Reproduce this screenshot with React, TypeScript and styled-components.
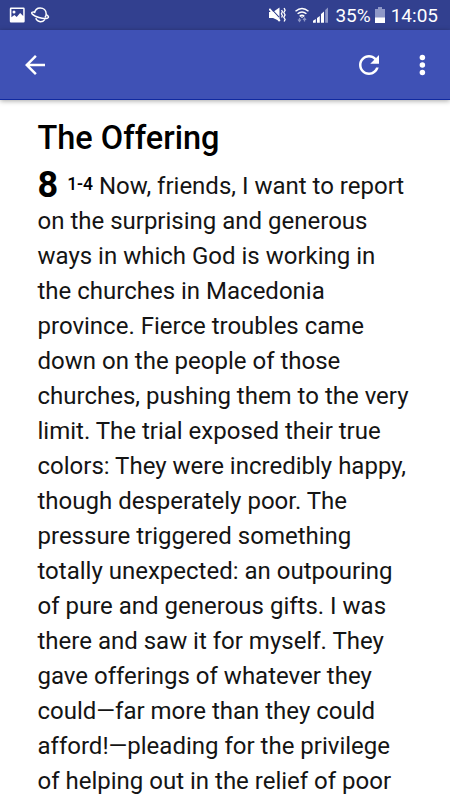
import React from "react";
import styled, { createGlobalStyle } from "styled-components";

const Global = createGlobalStyle`
  * { box-sizing: border-box; }
  body { margin: 0; background: #fff; overflow: hidden; font-family: Roboto, sans-serif; }
`;

const Screen = styled.div`
  width: 450px;
  height: 800px;
  overflow: hidden;
  background: #fff;
  display: flex;
  flex-direction: column;
`;

const StatusBar = styled.header`
  height: 30px;
  flex: none;
  background: #32408f;
  color: #fff;
  display: flex;
  align-items: center;
  justify-content: space-between;
  padding: 0 12px 0 9px;
`;

const Cluster = styled.div`
  display: flex;
  align-items: center;
`;

const StatusText = styled.span`
  font-size: 19px;
  line-height: 30px;
  padding-top: 1px;
  white-space: nowrap;
`;

const Glyph = styled.svg<{ $w: number; $h: number; $gap?: number; $lead?: number }>`
  width: ${p => p.$w}px;
  height: ${p => p.$h}px;
  margin-right: ${p => p.$gap ?? 0}px;
  margin-left: ${p => p.$lead ?? 0}px;
  fill: #fff;
  display: block;
  flex: none;
`;

const AppBar = styled.nav`
  height: 70px;
  flex: none;
  background: #3f51b5;
  border-bottom: 1px solid #1029a0;
  box-shadow: 0 1px 5px rgba(0, 0, 0, 0.35);
  display: flex;
  align-items: center;
  justify-content: space-between;
  padding: 1px 13px 0 20px;
`;

const BarButton = styled.button`
  border: 0;
  padding: 0;
  background: none;
`;

const Actions = styled.div`
  display: flex;
  gap: 23px;
`;

const Article = styled.main`
  padding: 18px 0 0 37.5px;
  color: #000;
  white-space: nowrap;
`;

const Heading = styled.h1`
  margin: 0 0 11px;
  font-size: 32.5px;
  line-height: 40px;
  font-weight: 500;
`;

const Passage = styled.div`
  font-size: 24px;
  line-height: 35px;
`;

const Line = styled.div`
  height: 35px;
  display: flex;
  align-items: baseline;
`;

const Prose = styled.span`
  font-weight: 400;
  color: #141414;
`;

const Chapter = styled.b`
  font-size: 36px;
  line-height: 20px;
  font-weight: 700;
  margin-right: 9px;
  transform: translateY(3px);
`;

const Verse = styled.span`
  font-size: 17.5px;
  font-weight: 500;
  line-height: 20px;
  margin-right: 6px;
  transform: translateY(-4px);
`;

const lines = [
  "on the surprising and generous",
  "ways in which God is working in",
  "the churches in Macedonia",
  "province. Fierce troubles came",
  "down on the people of those",
  "churches, pushing them to the very",
  "limit. The trial exposed their true",
  "colors: They were incredibly happy,",
  "though desperately poor. The",
  "pressure triggered something",
  "totally unexpected: an outpouring",
  "of pure and generous gifts. I was",
  "there and saw it for myself. They",
  "gave offerings of whatever they",
  "could—far more than they could",
  "afford!—pleading for the privilege",
  "of helping out in the relief of poor",
];

export default function App() {
  return (
    <Screen>
      <Global />
      <StatusBar>
        <Cluster>
          <Glyph $w={17} $h={16} $gap={5} viewBox="0 0 17 16">
            <path fillRule="evenodd" d="M2 .5h12.5a1.2 1.2 0 0 1 1.2 1.2v12.6a1.2 1.2 0 0 1-1.2 1.2H2a1.2 1.2 0 0 1-1.2-1.2V1.7A1.2 1.2 0 0 1 2 .5ZM2.4 2v8.3l3-2.300 2.300 2 3.400-4 3.100 3V2Z" />
            <circle cx="5" cy="5" r="1.5" />
          </Glyph>
          <Glyph $w={19} $h={16} viewBox="0 0 19 16">
            <g fill="none" stroke="#fff" strokeWidth="1.5">
              <path d="M3.500 6.200C4.100 2.700 6.400 1 9.100 1c3.400 0 6.100 2.400 6.100 5.900 0 1.500-.5 2.800-1.300 3.700" />
              <path d="M4.100 5.100C1 4.500 0 5.500 1.200 7c2.200 2.700 10.600 5.200 15 4.200 2-.5 1.500-2.100-.9-3.500" />
              <path d="M4.700 11.200c2 4.500 7 4.500 9.300 1.200" />
            </g>
          </Glyph>
        </Cluster>
        <Cluster>
          <Glyph $w={17} $h={16} $gap={9} viewBox="0 0 17 16">
            <path d="M0 5h4L10.500.5V14L4 11H0Z" />
            <path d="M1.500 1 10 10.200" stroke="#32408f" strokeWidth="1.100" />
            <path d="M.3 1.800 10.800 14" stroke="#fff" strokeWidth="2" />
            <path d="m12.600 3 .8 1.800-1 2 1 2-.8 1.800M15.100 1l1 2.300-1.300 2.300 1.300 2.300-1.300 2.300 1.300 2.300-1 2" fill="none" stroke="#fff" strokeWidth="1.300" />
          </Glyph>
          <Glyph $w={14} $h={16} $gap={4} viewBox="0 0 14 15">
            <path d="M.5 3.700Q7-1.800 13.500 3.700M2.600 6.300q4.400-3.700 8.800 0M4.700 8.800q2.300-1.900 4.600 0" fill="none" stroke="#fff" strokeWidth="1.500" />
            <path d="m7 10.500-1.500-1.300h3Z" />
            <path d="M4.500 10.500v3M3 12l1.500 2L6 12M9.500 14v-3M8 12.500l1.500-2 1.500 2" fill="none" stroke="#8f98c7" strokeWidth="1.200" />
          </Glyph>
          <Glyph $w={16} $h={16} $gap={6} viewBox="0 0 16 16">
            <path d="M0 13.800 2.800 12v3.800H0ZM4 11l2.800-2v6.800H4ZM8 7l3-2.500v11.300H8Z" />
            <path d="M12.200 3 15 .5v15.300h-2.800Z" fill="#8f98c7" />
          </Glyph>
          <StatusText>35%</StatusText>
          <Glyph $w={10} $h={16} $gap={6} $lead={4} viewBox="0 0 10 16">
            <path d="M3 0h4v2h3v9H0V2h3Z" fill="#8f98c7" />
            <path d="M0 10.500h10V16H0Z" />
          </Glyph>
          <StatusText>14:05</StatusText>
        </Cluster>
      </StatusBar>
      <AppBar>
        <BarButton aria-label="Back">
          <Glyph $w={30} $h={30} viewBox="0 0 24 24"><path d="M20 11H7.830l5.590-5.590L12 4l-8 8 8 8 1.410-1.410L7.830 13H20z" /></Glyph>
        </BarButton>
        <Actions>
          <BarButton aria-label="Refresh">
            <Glyph $w={30} $h={30} viewBox="0 0 24 24"><path d="M17.650 6.350C16.200 4.900 14.210 4 12 4c-4.420 0-7.990 3.580-7.990 8s3.570 8 7.990 8c3.730 0 6.840-2.550 7.730-6h-2.080c-.82 2.330-3.040 4-5.650 4-3.310 0-6-2.690-6-6s2.690-6 6-6c1.660 0 3.140.69 4.220 1.780L13 11h7V4l-2.350 2.350z" /></Glyph>
          </BarButton>
          <BarButton aria-label="More">
            <Glyph $w={30} $h={30} viewBox="0 0 24 24"><circle cx="12.300" cy="6" r="2.200" /><circle cx="12.300" cy="12" r="2.200" /><circle cx="12.300" cy="18" r="2.200" /></Glyph>
          </BarButton>
        </Actions>
      </AppBar>
      <Article>
        <Heading>The Offering</Heading>
        <Passage>
          <Line><Chapter>8</Chapter><Verse>1-4</Verse><Prose>Now, friends, I want to report</Prose></Line>
          {lines.map(line => <Line key={line}><Prose>{line}</Prose></Line>)}
        </Passage>
      </Article>
    </Screen>
  );
}
